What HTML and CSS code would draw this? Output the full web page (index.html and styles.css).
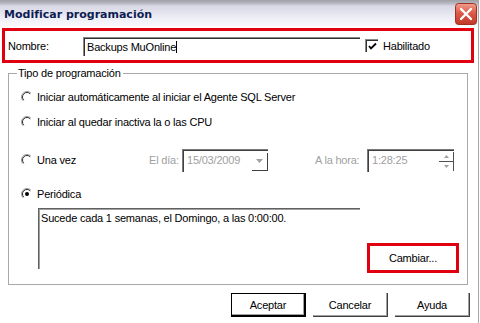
FILE: index.html
```html
<!DOCTYPE html>
<html lang="es">
<head>
    <meta charset="UTF-8">
    <title>Modificar programación</title>
    <link rel="stylesheet" href="styles.css">
</head>
<body>
    <div class="window">
        <div class="titlebar">
            <span class="title">Modificar programación</span>
            <svg class="close-btn" width="22" height="22" viewBox="0 0 22 22">
                <defs>
                    <linearGradient id="closeGrad" x1="0" y1="0" x2="0" y2="1">
                        <stop offset="0" stop-color="#f0a090"/>
                        <stop offset="0.45" stop-color="#dc5a48"/>
                        <stop offset="1" stop-color="#c03828"/>
                    </linearGradient>
                </defs>
                <rect x="0.5" y="0.5" width="21" height="21" rx="3" fill="url(#closeGrad)" stroke="#a03020"/>
                <path d="M6 6 L16 16 M16 6 L6 16" stroke="#fff" stroke-width="2.4" stroke-linecap="round"/>
            </svg>
        </div>

        <div class="name-box">
            <span class="name-label">Nombre:</span>
            <div class="name-input">Backups MuOnline<span class="caret"></span></div>
            <span class="checkbox">
                <svg width="9" height="9" viewBox="0 0 9 9"><path d="M1 4 L3 6.5 L8 1.5" fill="none" stroke="#000" stroke-width="1.8"/></svg>
            </span>
            <span>Habilitado</span>
        </div>

        <div class="group">
            <span class="group-title">Tipo de programación</span>

            <div class="option option-1">
                <svg class="radio" width="12" height="12" viewBox="0 0 12 12"><path d="M2.1 9.9 A5.5 5.5 0 0 1 9.9 2.1" fill="none" stroke="#9a9a9a"/><path d="M2.8 9.2 A4.5 4.5 0 0 1 9.2 2.8" fill="none" stroke="#303030"/></svg>
                <span>Iniciar automáticamente al iniciar el Agente SQL Server</span>
            </div>

            <div class="option option-2">
                <svg class="radio" width="12" height="12" viewBox="0 0 12 12"><path d="M2.1 9.9 A5.5 5.5 0 0 1 9.9 2.1" fill="none" stroke="#9a9a9a"/><path d="M2.8 9.2 A4.5 4.5 0 0 1 9.2 2.8" fill="none" stroke="#303030"/></svg>
                <span>Iniciar al quedar inactiva la o las CPU</span>
            </div>

            <div class="option option-3">
                <svg class="radio" width="12" height="12" viewBox="0 0 12 12"><path d="M2.1 9.9 A5.5 5.5 0 0 1 9.9 2.1" fill="none" stroke="#9a9a9a"/><path d="M2.8 9.2 A4.5 4.5 0 0 1 9.2 2.8" fill="none" stroke="#303030"/></svg>
                <span class="once-label">Una vez</span>
                <span class="disabled day-label">El día:</span>
                <div class="combo">
                    <span class="combo-text">15/03/2009</span>
                    <span class="combo-btn"><svg width="7" height="4" viewBox="0 0 7 4"><path d="M0 0 H7 L3.5 4 Z" fill="#a0a0a0"/></svg></span>
                </div>
                <span class="disabled hour-label">A la hora:</span>
                <div class="spinner">
                    <span class="combo-text">1:28:25</span>
                    <span class="spin-btns">
                        <span class="spin-up"><svg width="5" height="3" viewBox="0 0 5 3"><path d="M0 3 H5 L2.5 0 Z" fill="#a0a0a0"/></svg></span>
                        <span class="spin-down"><svg width="5" height="3" viewBox="0 0 5 3"><path d="M0 0 H5 L2.5 3 Z" fill="#a0a0a0"/></svg></span>
                    </span>
                </div>
            </div>

            <div class="option option-4">
                <svg class="radio" width="12" height="12" viewBox="0 0 12 12"><path d="M2.1 9.9 A5.5 5.5 0 0 1 9.9 2.1" fill="none" stroke="#9a9a9a"/><path d="M2.8 9.2 A4.5 4.5 0 0 1 9.2 2.8" fill="none" stroke="#303030"/><circle cx="6" cy="6" r="2" fill="#000"/></svg>
                <span>Periódica</span>
            </div>

            <div class="summary-row">
                <div class="summary">Sucede cada 1 semanas, el Domingo, a las 0:00:00.</div>
                <div class="change-box">
                    <button class="change-btn">Cambiar...</button>
                </div>
            </div>
        </div>

        <div class="buttons">
            <button class="btn default-btn">Aceptar</button>
            <button class="btn">Cancelar</button>
            <button class="btn">Ayuda</button>
        </div>
    </div>
</body>
</html>
```

FILE: styles.css
```css
body {
    margin: 0;
    padding: 0;
    background-color: #fff;
    font-family: 'Liberation Sans', Arial, sans-serif;
    font-size: 11px;
    letter-spacing: -0.2px;
    color: #000;
}
.window {
    width: 479px;
    height: 323px;
    border-right: 1px solid #a8a8a8;
    box-sizing: border-box;
    overflow: hidden;
}
.titlebar {
    height: 26px;
    display: flex;
    align-items: center;
    justify-content: space-between;
    padding: 0 1px 0 4px;
    background: linear-gradient(to bottom, #a0a0a6 0, #b4b4be 3px, #d8d8e6 6px, #eeeef6 18px, #f8f8fc 26px);
}
.title {
    font-family: 'DejaVu Sans', sans-serif;
    font-weight: bold;
    font-size: 11px;
    letter-spacing: 0;
    color: #0e1c52;
    padding-top: 2px;
}
.close-btn {
    display: block;
    margin-top: 1px;
}
.name-box {
    margin: 2px 0 0 2px;
    width: 472px;
    height: 35px;
    border: 3px solid #e00010;
    box-sizing: border-box;
    display: flex;
    align-items: center;
    padding-left: 3px;
}
.name-label {
    width: 75px;
}
.name-input {
    width: 277px;
    height: 19px;
    box-sizing: border-box;
    border-top: 1px solid #888;
    border-left: 1px solid #888;
    box-shadow: inset 1px 1px 0 #303030;
    padding: 3px 0 0 3px;
    margin-top: 1px;
}
.caret {
    display: inline-block;
    width: 1px;
    height: 12px;
    background: #000;
    vertical-align: -2px;
}
.checkbox {
    width: 13px;
    height: 13px;
    box-sizing: border-box;
    border-top: 1px solid #888;
    border-left: 1px solid #888;
    box-shadow: inset 1px 1px 0 #303030;
    margin: 0 5px 0 5px;
    display: flex;
    align-items: center;
    justify-content: center;
    padding: 1px 0 0 1px;
}
.checkbox svg {
    display: block;
}
.group {
    margin: 10px 0 0 8px;
    width: 460px;
    height: 212px;
    border: 1px solid #a8a8a8;
    box-sizing: border-box;
    display: flex;
    flex-direction: column;
    align-items: flex-start;
}
.group-title {
    margin: -7px 0 0 8px;
    padding: 0 2px 0 1px;
    height: 13px;
    line-height: 13px;
    background: #fff;
}
.option {
    display: flex;
    align-items: center;
    height: 16px;
    padding-left: 12px;
}
.radio {
    display: block;
    margin-right: 4px;
    flex-shrink: 0;
}
.option-1 {
    margin-top: 9px;
}
.option-2 {
    margin-top: 9px;
}
.option-3 {
    margin-top: 18px;
    height: 24px;
}
.option-4 {
    margin-top: 14px;
}
.once-label {
    width: 112px;
}
.disabled {
    color: #a0a0a0;
}
.day-label {
    width: 33px;
}
.combo, .spinner {
    height: 23px;
    box-sizing: border-box;
    border-top: 1px solid #7a7a7a;
    border-left: 1px solid #7a7a7a;
    box-shadow: inset 1px 1px 0 #404040;
    display: flex;
    align-items: center;
    justify-content: space-between;
    color: #a0a0a0;
    padding-left: 4px;
}
.combo {
    width: 86px;
}
.combo-text {
    padding-bottom: 1px;
}
.combo-btn {
    width: 16px;
    height: 18px;
    margin: 2px 0 0 0;
    box-sizing: border-box;
    border-right: 1px solid #404040;
    border-bottom: 1px solid #404040;
    display: flex;
    align-items: center;
    justify-content: center;
}
.combo-btn svg, .spin-btns svg {
    display: block;
}
.hour-label {
    margin-left: 47px;
    width: 52px;
}
.spinner {
    width: 87px;
}
.spin-btns {
    width: 15px;
    height: 19px;
    margin-top: 2px;
    display: flex;
    flex-direction: column;
}
.spin-up, .spin-down {
    flex: 1;
    display: flex;
    align-items: center;
    justify-content: center;
    border-right: 1px solid #505050;
}
.spin-up {
    border-bottom: 1px solid #505050;
}
.summary-row {
    display: flex;
    align-items: flex-end;
    margin: 6px 0 0 29px;
    height: 65px;
}
.summary {
    width: 322px;
    height: 61px;
    align-self: flex-start;
    box-sizing: border-box;
    border-top: 1px solid #606060;
    border-left: 1px solid #606060;
    box-shadow: inset 1px 1px 0 #a0a0a0;
    padding: 3px 0 0 2px;
}
.change-box {
    margin-left: 7px;
    width: 92px;
    height: 30px;
    border: 3px solid #e00010;
    box-sizing: border-box;
}
.change-btn {
    width: 100%;
    height: 100%;
    border: none;
    background: #fff;
    font-family: inherit;
    font-size: 11px;
    letter-spacing: -0.2px;
    padding: 0 0 1px 0;
    color: #000;
}
.buttons {
    display: flex;
    gap: 7px;
    margin: 8px 0 0 231px;
}
.btn {
    width: 75px;
    height: 24px;
    box-sizing: border-box;
    background: #fff;
    border: none;
    border-right: 1px solid #404040;
    border-bottom: 1px solid #404040;
    box-shadow: inset -1px -1px 0 #a0a0a0;
    font-family: inherit;
    font-size: 11px;
    letter-spacing: -0.2px;
    color: #000;
    padding: 0;
}
.default-btn {
    border: 1px solid #000;
    border-right-width: 2px;
    border-bottom-width: 2px;
}
```
